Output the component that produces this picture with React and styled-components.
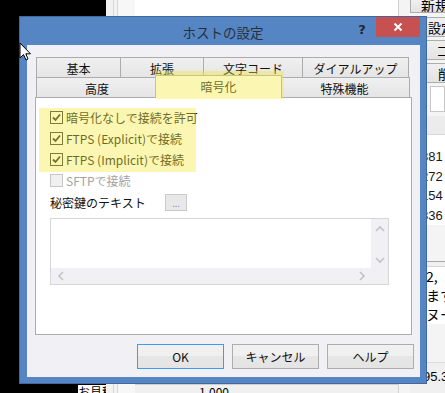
import React from "react";
import styled, { createGlobalStyle } from "styled-components";

const GlobalStyle = createGlobalStyle`
  html, body {
    margin: 0;
    padding: 0;
    background: #000;
  }
  body {
    font-family: "Noto Sans CJK JP", "Noto Sans", sans-serif;
    font-size: 12px;
    color: #000;
  }
`;

const Desktop = styled.div`
  position: relative;
  width: 445px;
  height: 393px;
  overflow: hidden;
  background: #000;
`;

// window behind the dialog
const BackWindow = styled.div`
  position: absolute;
  left: 106px;
  top: 0;
  right: 0;
  bottom: 0;
  display: flex;
  background: #fff;
`;

const SideStrip = styled.div`
  width: 29px;
  background: linear-gradient(
    90deg,
    #f2f2f2 0,
    #f2f2f2 7px,
    #d8d8d8 7px,
    #d8d8d8 8px,
    #f2f2f2 8px,
    #f2f2f2 11px,
    #d8d8d8 11px,
    #d8d8d8 12px,
    #f7f7f7 12px
  );
`;

const MainArea = styled.div`
  flex: 1;
  display: flex;
  flex-direction: column;
  justify-content: flex-end;
`;

const Divider = styled.div`
  width: 11px;
  border-left: 1px solid #d0d0d0;
  background: #f4f4f4;
`;

const RightPane = styled.div`
  width: 35px;
  display: flex;
  flex-direction: column;
  background: #f4f4f4;
`;

const SideButton = styled.div`
  height: ${(p) => p.$h || 20}px;
  margin-top: ${(p) => p.$mt || 0}px;
  box-sizing: border-box;
  border: 1px solid #adadad;
  border-right: none;
  border-top: ${(p) => (p.$top ? "none" : "1px solid #adadad")};
  background: linear-gradient(#f0f0f0, #e3e3e3);
  display: flex;
  align-items: ${(p) => (p.$top ? "flex-end" : "center")};
  padding-left: ${(p) => p.$pl || 10}px;
  font-size: ${(p) => (p.$top ? 14 : 13)}px;
  line-height: 1;
  white-space: nowrap;
  overflow: hidden;
`;

const SmallBox = styled.div`
  height: 26px;
  margin-top: 3px;
  margin-left: 20px;
  box-sizing: border-box;
  border: 1px solid #c8c8c8;
  background: #fff;
`;

const ListHeader = styled.div`
  height: 18px;
  margin-top: 4px;
  background: #ececec;
  border-bottom: 1px solid #d8d8d8;
`;

const ListBody = styled.div`
  background: #fff;
  padding-top: 12px;
  display: flex;
  flex-direction: column;
`;

const ListItem = styled.div`
  height: 19.5px;
  line-height: 19px;
  padding-left: 11px;
  font-size: 13px;
  color: #1a1a1a;
  font-family: "Liberation Sans", "Noto Sans", sans-serif;
  white-space: nowrap;
`;

const Separator = styled.div`
  height: 4px;
  margin-top: 36px;
  border-top: 1px solid #a8a8a8;
  border-bottom: 1px solid #d6d6d6;
  background: #f0f0f0;
`;

const NoteLine = styled.div`
  height: 19px;
  line-height: 19px;
  padding-left: 16px;
  font-size: 14px;
  background: #fff;
  white-space: nowrap;
  overflow: hidden;
`;

const StatusRow = styled.div`
  flex: 1;
  margin-top: 38px;
  border-top: 1px solid #dcdcdc;
  background: #f0f0f0;
  padding-left: 13px;
  padding-top: 6px;
  font-size: 13px;
  font-family: "Liberation Sans", sans-serif;
  white-space: nowrap;
`;

const BottomStrip = styled.div`
  height: 8px;
  border-top: 1px solid #cfcfcf;
  background: #f0f0f0;
  font-size: 12px;
  line-height: 14px;
  padding-left: 64px;
  overflow: hidden;
  white-space: nowrap;
`;

const BottomLabel = styled.div`
  position: absolute;
  left: 78px;
  top: 385px;
  width: 28px;
  height: 8px;
  overflow: hidden;
  background: #fff;
  font-size: 12px;
  line-height: 14px;
  white-space: nowrap;
`;

// dialog window
const Dialog = styled.div`
  position: absolute;
  left: 19px;
  top: 16px;
  width: 408px;
  height: 368px;
  box-sizing: border-box;
  background: #5585c3;
  border: 1px solid #41689e;
  display: flex;
  flex-direction: column;
`;

const TitleBar = styled.div`
  height: 28px;
  display: grid;
  grid-template-columns: 1fr auto 1fr;
`;

const Title = styled.div`
  align-self: center;
  font-size: 13.5px;
  color: #26303c;
  padding-top: 2px;
`;

const TitleControls = styled.div`
  justify-self: end;
  display: flex;
  align-items: flex-start;
  margin-right: 6px;
`;

const HelpGlyph = styled.div`
  width: 16px;
  height: 20px;
  margin-right: 6px;
  margin-top: 2px;
  display: flex;
  align-items: center;
  justify-content: center;
  font-family: "DejaVu Sans", sans-serif;
  font-weight: bold;
  font-size: 13px;
  color: #1e2630;
`;

const CloseButton = styled.div`
  width: 44px;
  height: 20px;
  background: #c75050;
  display: flex;
  align-items: center;
  justify-content: center;
`;

const Client = styled.div`
  flex: 1;
  margin: 0 6px 6px 7px;
  background: #f1f0f4;
  box-sizing: border-box;
  padding: 12px 8px 8px 8px;
  display: flex;
  flex-direction: column;
`;

const TabStrip = styled.div`
  margin-left: 1px;
  display: flex;
  flex-direction: column;
`;

const TabRow = styled.div`
  display: flex;
  align-items: flex-end;
  height: 20px;
`;

const Tab = styled.div`
  box-sizing: border-box;
  width: ${(p) => p.$w}px;
  height: 20px;
  border: 1px solid #acacac;
  border-bottom: none;
  background: linear-gradient(#f0f0f0, #e5e5e5);
  display: flex;
  align-items: center;
  justify-content: center;
  font-size: 12px;
  color: #111;
  padding-top: 1px;

  & + & {
    margin-left: -1px;
  }
`;

const ActiveTab = styled(Tab)`
  position: relative;
  z-index: 1;
  width: ${(p) => p.$w + 4}px;
  height: 23px;
  margin-bottom: -1px;
  background: #fff;
  padding-top: 0;
  padding-bottom: 1px;

  && {
    margin-left: -3px;
    margin-right: -2px;
  }
`;

const Panel = styled.div`
  box-sizing: border-box;
  height: 238px;
  border: 1px solid #acacac;
  background: #fff;
  padding: 9px 0 0 14px;
  display: flex;
  flex-direction: column;
`;

const CheckRow = styled.label`
  height: 21px;
  display: flex;
  align-items: center;
  gap: 3px;
  font-size: 12px;
  color: ${(p) => (p.$disabled ? "#a3a3a3" : "#111")};
`;

const Box = styled.span`
  width: 13px;
  height: 13px;
  box-sizing: border-box;
  border: 1px solid ${(p) => (p.$disabled ? "#c6c6c6" : "#333")};
  background: ${(p) => (p.$disabled ? "#f0f0f0" : "#fff")};
  display: flex;
  align-items: center;
  justify-content: center;
`;

const KeyRow = styled.div`
  height: 22px;
  display: flex;
  align-items: center;
`;

const KeyLabel = styled.span`
  width: 115px;
  font-size: 12px;
  color: #111;
`;

const DotsButton = styled.div`
  width: 22px;
  height: 17px;
  box-sizing: border-box;
  border: 1px solid #cacaca;
  background: #e8e8e8;
  color: #8a8a8a;
  font-size: 9px;
  display: flex;
  align-items: flex-end;
  justify-content: center;
  padding-bottom: 2px;
  line-height: 1;
`;

const TextArea = styled.div`
  margin-top: 5px;
  width: 339px;
  height: 67px;
  box-sizing: border-box;
  border: 1px solid #d6d6d6;
  display: grid;
  grid-template-columns: 1fr 17px;
  grid-template-rows: 1fr 16px;
  background: #f1f0f4;
`;

const TextInner = styled.div`
  background: #fff;
  border-bottom-right-radius: 2px;
`;

const VScroll = styled.div`
  display: flex;
  flex-direction: column;
  justify-content: space-between;
  align-items: center;
  padding: 6px 0 4px;
`;

const HScroll = styled.div`
  display: flex;
  justify-content: space-between;
  align-items: center;
  padding: 0 5px 0 6px;
`;

const Corner = styled.div``;

const ButtonRow = styled.div`
  margin-top: 9px;
  margin-right: -2px;
  display: flex;
  justify-content: flex-end;
  gap: 8px;
`;

const DialogButton = styled.div`
  width: 87px;
  height: 25px;
  box-sizing: border-box;
  border: 1px solid ${(p) => (p.$primary ? "#3c9cf0" : "#adadad")};
  background: linear-gradient(#f0f0f0 0, #f0f0f0 50%, #e6e6e6 50%, #e4e4e4);
  display: flex;
  align-items: center;
  justify-content: center;
  font-size: 12px;
  color: #111;
`;

// annotation marker drawn over the screenshot
const Highlight = styled.div`
  position: absolute;
  left: ${(p) => p.$x}px;
  top: ${(p) => p.$y}px;
  width: ${(p) => p.$w}px;
  height: ${(p) => p.$h}px;
  background: rgba(246, 234, 62, 0.4);
  pointer-events: none;
  z-index: 5;
`;

const Cursor = styled.svg`
  position: absolute;
  left: 19px;
  top: 42px;
  z-index: 6;
`;

const Chevron = ({ dir }) => {
  const paths = {
    up: "M1 6 L5 2 L9 6",
    down: "M1 2 L5 6 L9 2",
    left: "M6 1 L2 5 L6 9",
    right: "M2 1 L6 5 L2 9",
  };
  const vertical = dir === "up" || dir === "down";
  return (
    <svg
      width={vertical ? 10 : 8}
      height={vertical ? 8 : 10}
      viewBox={vertical ? "0 0 10 8" : "0 0 8 10"}
    >
      <path d={paths[dir]} fill="none" stroke="#c2c2c2" strokeWidth="1.6" />
    </svg>
  );
};

const CheckMark = () => (
  <svg width="9" height="9" viewBox="0 0 9 9">
    <path
      d="M1 4.5 L3.5 7 L8 1.5"
      fill="none"
      stroke="#222"
      strokeWidth="1.8"
    />
  </svg>
);

function Check({ checked, disabled, children }) {
  return (
    <CheckRow $disabled={disabled}>
      <Box $disabled={disabled}>{checked && <CheckMark />}</Box>
      <span>{children}</span>
    </CheckRow>
  );
}

const topTabs = [
  { label: "基本", w: 85 },
  { label: "拡張", w: 84 },
  { label: "文字コード", w: 100 },
  { label: "ダイアルアップ", w: 107 },
];

const bottomTabs = [
  { label: "高度", w: 122 },
  { label: "暗号化", w: 123, active: true },
  { label: "特殊機能", w: 131 },
];

export default function App() {
  return (
    <>
      <GlobalStyle />
      <Desktop>
        <BackWindow>
          <SideStrip />
          <MainArea>
            <BottomStrip>1,000</BottomStrip>
          </MainArea>
          <Divider />
          <RightPane>
            <SideButton $h={13} $top $pl={10}>新規</SideButton>
            <SideButton $mt={4} $pl={17}>設定</SideButton>
            <SideButton $mt={3} $pl={25}>コピー</SideButton>
            <SideButton $mt={3} $pl={27}>削除</SideButton>
            <SmallBox />
            <ListHeader />
            <ListBody>
              <ListItem>381</ListItem>
              <ListItem>272</ListItem>
              <ListItem>154</ListItem>
              <ListItem>836</ListItem>
            </ListBody>
            <Separator />
            <NoteLine>2,</NoteLine>
            <NoteLine>ます</NoteLine>
            <NoteLine>ヌー</NoteLine>
            <StatusRow>95.3</StatusRow>
          </RightPane>
        </BackWindow>
        <BottomLabel>お見積り</BottomLabel>

        <Dialog>
          <TitleBar>
            <div />
            <Title>ホストの設定</Title>
            <TitleControls>
              <HelpGlyph>?</HelpGlyph>
              <CloseButton>
                <svg width="10" height="10" viewBox="0 0 10 10">
                  <path
                    d="M1.5 1.5 L8.5 8.5 M8.5 1.5 L1.5 8.5"
                    stroke="#fff"
                    strokeWidth="2"
                  />
                </svg>
              </CloseButton>
            </TitleControls>
          </TitleBar>

          <Client>
            <TabStrip>
              <TabRow>
                {topTabs.map((t) => (
                  <Tab key={t.label} $w={t.w}>
                    {t.label}
                  </Tab>
                ))}
              </TabRow>
              <TabRow>
                {bottomTabs.map((t) =>
                  t.active ? (
                    <ActiveTab key={t.label} $w={t.w}>
                      {t.label}
                    </ActiveTab>
                  ) : (
                    <Tab key={t.label} $w={t.w}>
                      {t.label}
                    </Tab>
                  )
                )}
              </TabRow>
            </TabStrip>

            <Panel>
              <Check checked>暗号化なしで接続を許可</Check>
              <Check checked>FTPS (Explicit)で接続</Check>
              <Check checked>FTPS (Implicit)で接続</Check>
              <Check disabled>SFTPで接続</Check>
              <KeyRow>
                <KeyLabel>秘密鍵のテキスト</KeyLabel>
                <DotsButton>...</DotsButton>
              </KeyRow>
              <TextArea>
                <TextInner />
                <VScroll>
                  <Chevron dir="up" />
                  <Chevron dir="down" />
                </VScroll>
                <HScroll>
                  <Chevron dir="left" />
                  <Chevron dir="right" />
                </HScroll>
                <Corner />
              </TextArea>
            </Panel>

            <ButtonRow>
              <DialogButton $primary>OK</DialogButton>
              <DialogButton>キャンセル</DialogButton>
              <DialogButton>ヘルプ</DialogButton>
            </ButtonRow>
          </Client>
        </Dialog>

        <Highlight $x={155} $y={71} $w={129} $h={28} />
        <Highlight $x={39} $y={108} $w={157} $h={64} />

        <Cursor width="13" height="20" viewBox="0 0 13 20">
          <path
            d="M1 1 L1 16 L4.5 12.5 L7 18 L9 17 L6.8 11.8 L11.5 11.8 Z"
            fill="#fff"
            stroke="#000"
            strokeWidth="1"
            strokeLinejoin="miter"
          />
        </Cursor>
      </Desktop>
    </>
  );
}
